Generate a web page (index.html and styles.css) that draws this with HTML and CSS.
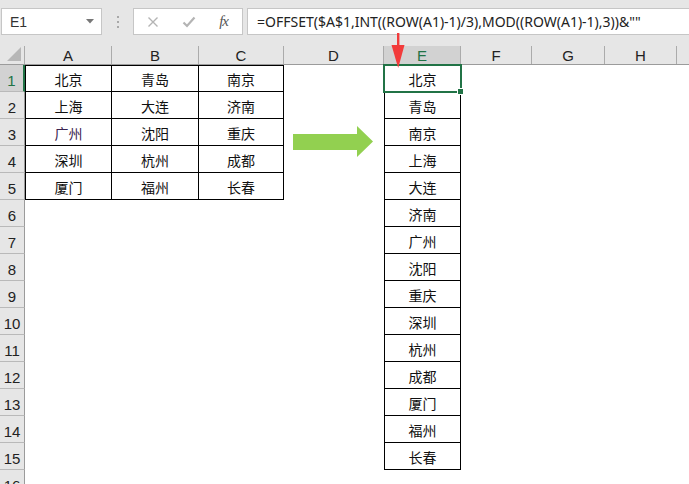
FILE: index.html
```html
<!DOCTYPE html>
<html lang="zh-CN">
<head>
  <meta charset="UTF-8" />
  <title>Excel - OFFSET</title>
  <link rel="stylesheet" href="styles.css">
</head>
<body>
  <div class="toolbar">
    <div class="namebox">
      <span>E1</span>
      <svg class="drop" width="8" height="5" viewBox="0 0 8 5"><polygon points="0,0 8,0 4,4.5" fill="#777"/></svg>
    </div>
    <div class="grip"><i></i><i></i><i></i></div>
    <div class="fbtns">
      <svg width="12" height="12" viewBox="0 0 12 12"><path d="M1.5 1.5 L10.5 10.5 M10.5 1.5 L1.5 10.5" stroke="#b4b4b4" stroke-width="1.4" fill="none"/></svg>
      <svg width="14" height="12" viewBox="0 0 14 12"><path d="M1.5 6.5 L5 10 L12.5 1.5" stroke="#b4b4b4" stroke-width="2.2" fill="none"/></svg>
      <span class="fx">fx</span>
    </div>
    <div class="formula">=OFFSET($A$1,INT((ROW(A1)-1)/3),MOD((ROW(A1)-1),3))&amp;""</div>
  </div>

  <!-- red marker pointing at the result column -->
  <svg class="pointer" width="14" height="36" viewBox="0 0 14 36"><rect x="6" y="0" width="2.4" height="14" fill="#f23b3b"/><polygon points="0.5,12 13.5,12 7.2,35" fill="#f23b3b"/></svg>

  <div class="sheet">
    <div class="row head">
      <div class="corner"><svg width="14" height="14" viewBox="0 0 14 14"><polygon points="14,0 14,14 0,14" fill="#b7b7b7"/></svg></div>
      <div class="ch">A</div><div class="ch">B</div><div class="ch">C</div><div class="ch">D</div>
      <div class="ch sel">E</div><div class="ch">F</div><div class="ch">G</div><div class="ch">H</div><div class="ch last"></div>
    </div>

    <div class="row">
      <div class="rh sel">1</div>
      <div class="c t l top">北京</div><div class="c t top">青岛</div><div class="c t top">南京</div>
      <div class="c"></div>
      <div class="c e top active">北京<span class="handle"></span></div>
      <div class="c"></div><div class="c"></div><div class="c"></div><div class="c"></div>
    </div>
    <div class="row">
      <div class="rh">2</div>
      <div class="c t l">上海</div><div class="c t">大连</div><div class="c t">济南</div>
      <div class="c"></div><div class="c e">青岛</div>
      <div class="c"></div><div class="c"></div><div class="c"></div><div class="c"></div>
    </div>
    <div class="row">
      <div class="rh">3</div>
      <div class="c t l purple">广州</div><div class="c t">沈阳</div><div class="c t">重庆</div>
      <div class="c arrow-cell">
        <svg class="arrow" width="80" height="31" viewBox="0 0 80 31"><polygon points="0,8 64,8 64,0 80,15.5 64,31 64,24 0,24" fill="#92d050"/></svg>
      </div>
      <div class="c e">南京</div>
      <div class="c"></div><div class="c"></div><div class="c"></div><div class="c"></div>
    </div>
    <div class="row">
      <div class="rh">4</div>
      <div class="c t l">深圳</div><div class="c t">杭州</div><div class="c t">成都</div>
      <div class="c"></div><div class="c e">上海</div>
      <div class="c"></div><div class="c"></div><div class="c"></div><div class="c"></div>
    </div>
    <div class="row">
      <div class="rh">5</div>
      <div class="c t l">厦门</div><div class="c t">福州</div><div class="c t">长春</div>
      <div class="c"></div><div class="c e">大连</div>
      <div class="c"></div><div class="c"></div><div class="c"></div><div class="c"></div>
    </div>
    <div class="row"><div class="rh">6</div><div class="c"></div><div class="c"></div><div class="c"></div><div class="c"></div><div class="c e">济南</div></div>
    <div class="row"><div class="rh">7</div><div class="c"></div><div class="c"></div><div class="c"></div><div class="c"></div><div class="c e">广州</div></div>
    <div class="row"><div class="rh">8</div><div class="c"></div><div class="c"></div><div class="c"></div><div class="c"></div><div class="c e">沈阳</div></div>
    <div class="row"><div class="rh">9</div><div class="c"></div><div class="c"></div><div class="c"></div><div class="c"></div><div class="c e">重庆</div></div>
    <div class="row"><div class="rh">10</div><div class="c"></div><div class="c"></div><div class="c"></div><div class="c"></div><div class="c e">深圳</div></div>
    <div class="row"><div class="rh">11</div><div class="c"></div><div class="c"></div><div class="c"></div><div class="c"></div><div class="c e">杭州</div></div>
    <div class="row"><div class="rh">12</div><div class="c"></div><div class="c"></div><div class="c"></div><div class="c"></div><div class="c e">成都</div></div>
    <div class="row"><div class="rh">13</div><div class="c"></div><div class="c"></div><div class="c"></div><div class="c"></div><div class="c e">厦门</div></div>
    <div class="row"><div class="rh">14</div><div class="c"></div><div class="c"></div><div class="c"></div><div class="c"></div><div class="c e">福州</div></div>
    <div class="row"><div class="rh">15</div><div class="c"></div><div class="c"></div><div class="c"></div><div class="c"></div><div class="c e">长春</div></div>
    <div class="row"><div class="rh">16</div></div>
  </div>
</body>
</html>
```

FILE: styles.css
```css
body {
  margin: 0;
  width: 689px;
  height: 484px;
  overflow: hidden;
  background: #e6e6e6;
  font-family: "Noto Sans CJK SC", "Liberation Sans", sans-serif;
  color: #222;
}

/* formula bar area */
.toolbar {
  height: 46px;
  box-sizing: border-box;
  padding-top: 8px;
  display: flex;
  align-items: flex-start;
}

.namebox {
  margin-left: 1px;
  width: 101px;
  height: 27px;
  box-sizing: border-box;
  background: white;
  border: 1px solid #c6c6c6;
  display: flex;
  align-items: center;
  justify-content: space-between;
  padding: 0 7px 0 8px;
  font-family: "Liberation Sans", sans-serif;
  font-size: 14px;
  color: #333;
}

.grip {
  width: 31px;
  height: 27px;
  display: flex;
  flex-direction: column;
  align-items: center;
  justify-content: center;
  gap: 3px;
}

.grip i {
  display: block;
  width: 2px;
  height: 2px;
  background: #a8a8a8;
}

.fbtns {
  width: 110px;
  height: 27px;
  box-sizing: border-box;
  background: white;
  border: 1px solid #c6c6c6;
  display: flex;
  align-items: center;
  justify-content: space-between;
  padding: 0 14px 0 13px;
}

.fx {
  font-family: "Liberation Serif", serif;
  font-style: italic;
  font-size: 15px;
  color: #555;
  letter-spacing: -1px;
}

.formula {
  flex: 1;
  margin-left: 4px;
  height: 27px;
  box-sizing: border-box;
  background: white;
  border: 1px solid #c6c6c6;
  border-right: none;
  padding-left: 9px;
  font-family: "Noto Sans", sans-serif;
  font-size: 14px;
  line-height: 25px;
  color: #222;
  white-space: nowrap;
  overflow: hidden;
}

.pointer {
  position: absolute;
  left: 391px;
  top: 33px;
  z-index: 2;
}

/* worksheet */
.sheet {
  background: white;
  height: 438px;
  overflow: hidden;
}

.row {
  display: grid;
  grid-template-columns: 25px 87px 87px 85px 100px 77px 71px 73px 72px 1fr;
  grid-template-rows: 27px;
  height: 27px;
}

.row.head {
  grid-template-rows: 18px;
  height: 18px;
  background: #e6e6e6;
  border-bottom: 1px solid #9b9b9b;
}

.corner {
  border-right: 1px solid #ababab;
  display: flex;
  align-items: flex-end;
  justify-content: flex-end;
  padding: 0 3px 3px 0;
}

.ch {
  border-right: 1px solid #ababab;
  text-align: center;
  font-family: "Liberation Sans", sans-serif;
  font-size: 15px;
  line-height: 20px;
  color: #222;
}

.ch.sel {
  background: #d2d2d2;
  color: #217346;
}

.ch.last {
  border-right: none;
}

.rh {
  background: #e6e6e6;
  border-right: 1px solid #9b9b9b;
  border-bottom: 1px solid #b9b9b9;
  font-family: "Liberation Sans", sans-serif;
  font-size: 15px;
  text-align: center;
  line-height: 32px;
  color: #222;
  overflow: hidden;
}

.rh.sel {
  background: #d2d2d2;
  color: #217346;
  border-right: 2px solid #217346;
}

.c {
  font-size: 14px;
  text-align: center;
  line-height: 27px;
  color: #111;
  box-sizing: border-box;
}

.c.t {
  border-right: 1px solid #000;
  border-bottom: 1px solid #000;
  line-height: 28px;
}

.c.l {
  border-left: 1px solid #000;
}

.c.e {
  border-left: 1px solid #000;
  border-right: 1px solid #000;
  border-bottom: 1px solid #000;
  line-height: 28px;
}

.c.top {
  border-top: 1px solid #000;
  line-height: 26px;
}

.purple {
  color: #3b2450;
}

.active {
  position: relative;
  outline: 2px solid #217346;
  outline-offset: -1px;
}

.handle {
  position: absolute;
  right: -4px;
  bottom: -4px;
  width: 5px;
  height: 5px;
  background: #217346;
  border: 1px solid white;
}

.arrow-cell {
  overflow: visible;
}

.arrow {
  display: block;
  margin: 7px 0 0 9px;
}
```
